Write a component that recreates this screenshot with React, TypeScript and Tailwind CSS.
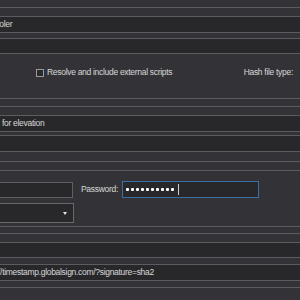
import React from "react";

function Line() {
  return <div className="h-px shrink-0 bg-[#5c5c60]" />;
}

function Field({ h, children }: { h: number; children?: React.ReactNode }) {
  return (
    <div className="shrink-0 flex flex-col">
      <Line />
      <div
        className="bg-[#28282b] flex items-center overflow-hidden whitespace-nowrap text-[#d8d8d8]"
        style={{ height: h }}
      >
        {children}
      </div>
      <Line />
    </div>
  );
}

function Gap({ h }: { h: number }) {
  return <div className="shrink-0" style={{ height: h }} />;
}

export default function App() {
  return (
    <div
      className="w-[300px] h-[300px] overflow-hidden bg-[#333337] flex flex-col text-[8.5px] tracking-[-0.3px] text-[#d8d8d8]"
      style={{ fontFamily: '"Liberation Sans", Arial, sans-serif' }}
    >
      <Gap h={7} />
      <Line />
      <Gap h={8} />
      <Field h={15}>
        <span className="ml-[-15px]">Spooler</span>
      </Field>
      <Gap h={5} />
      <Field h={14} />

      {/* options row */}
      <div className="h-[44px] shrink-0 flex items-center pb-[7px] pl-[36px] pr-[7px]">
        <div className="w-[8px] h-[8px] border border-[#9a9a9a] bg-[#2a2a2d] mr-[3px]" />
        <span>Resolve and include external scripts</span>
        <span className="ml-auto">Hash file type:</span>
      </div>

      <Line />
      <Gap h={7} />
      <Line />
      <Gap h={8} />
      <Field h={15}>
        <span className="pl-[2px]">for elevation</span>
      </Field>
      <Gap h={3} />
      <Field h={15} />
      <Gap h={9} />
      <Line />
      <Gap h={8} />
      <Line />

      {/* credentials */}
      <div className="h-[55px] shrink-0 flex flex-col pt-[10px]">
        <div className="flex items-center h-[17px]">
          <div className="w-[75px] h-[16px] ml-[-2px] border border-[#5f5f63] bg-[#28282b]" />
          <span className="ml-[8px] w-[41px]">Password:</span>
          <div className="w-[137px] h-[17px] border border-[#3a6ea5] bg-[#28282b] flex items-center pl-[3px] gap-[2px]">
            {Array.from({ length: 10 }).map((_, i) => (
              <span key={i} className="w-[3px] h-[3px] rounded-[1px] bg-white" />
            ))}
            <span className="w-px h-[11px] bg-[#cfcfcf] ml-[2px]" />
          </div>
        </div>
        <div className="mt-[5px] w-[76px] h-[20px] ml-[-2px] border border-[#6a6a6e] bg-[#28282b] flex items-center justify-end pr-[6px]">
          <svg width="4" height="3" viewBox="0 0 4 3">
            <path d="M0 0h4L2 3z" fill="#e6e6e6" />
          </svg>
        </div>
      </div>

      <Line />
      <Gap h={6} />
      <Line />
      <Gap h={8} />
      <Field h={14} />
      <Gap h={6} />
      <Field h={15}>
        <span className="ml-[-17px]">http://timestamp.globalsign.com/?signature=sha2</span>
      </Field>
      <Gap h={6} />
      <Line />
    </div>
  );
}
